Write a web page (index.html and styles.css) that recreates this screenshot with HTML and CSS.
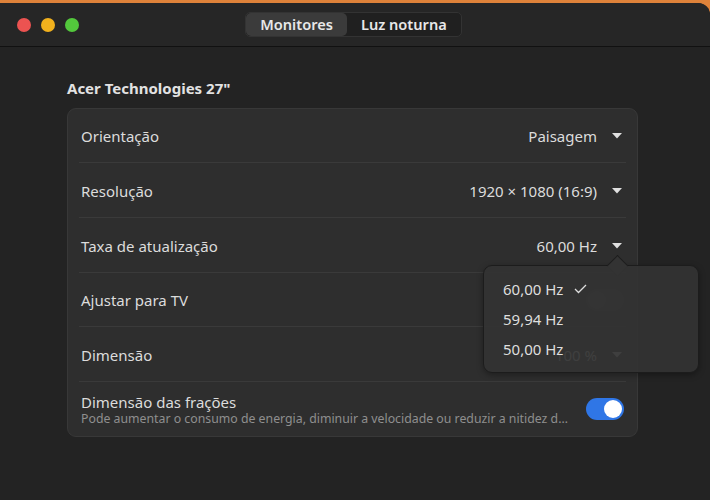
FILE: index.html
```html
<!DOCTYPE html>
<html lang="pt-BR">
<head>
    <meta charset="UTF-8">
    <title>Monitores</title>
    <link rel="stylesheet" href="styles.css">
</head>
<body>
    <div class="window">
        <div class="headerbar">
            <div class="controls">
                <span class="dot close"></span>
                <span class="dot min"></span>
                <span class="dot max"></span>
            </div>
            <div class="switcher">
                <div class="tab active">Monitores</div>
                <div class="tab">Luz noturna</div>
            </div>
            <div></div>
        </div>

        <div class="content">
            <h2 class="monitor-title">Acer Technologies 27"</h2>
            <div class="card">
                <div class="row short">
                    <span class="label">Orientação</span>
                    <span class="value">Paisagem</span>
                    <svg class="arrow" width="10" height="6" viewBox="0 0 10 6"><polygon points="0,0 10,0 5,5.5" /></svg>
                </div>
                <div class="row">
                    <span class="label">Resolução</span>
                    <span class="value">1920 × 1080 (16:9)</span>
                    <svg class="arrow" width="10" height="6" viewBox="0 0 10 6"><polygon points="0,0 10,0 5,5.5" /></svg>
                </div>
                <div class="row">
                    <span class="label">Taxa de atualização</span>
                    <span class="value">60,00 Hz</span>
                    <svg class="arrow" width="10" height="6" viewBox="0 0 10 6"><polygon points="0,0 10,0 5,5.5" /></svg>
                </div>
                <div class="row short">
                    <span class="label">Ajustar para TV</span>
                    <span class="switch off"><span class="knob"></span></span>
                </div>
                <div class="row">
                    <span class="label">Dimensão</span>
                    <span class="value">100 %</span>
                    <svg class="arrow" width="10" height="6" viewBox="0 0 10 6"><polygon points="0,0 10,0 5,5.5" /></svg>
                </div>
                <div class="row last">
                    <div class="label-group">
                        <span class="label">Dimensão das frações</span>
                        <span class="sublabel">Pode aumentar o consumo de energia, diminuir a velocidade ou reduzir a nitidez da tela.</span>
                    </div>
                    <span class="switch on"><span class="knob"></span></span>
                </div>
            </div>

            <!-- refresh rate popover -->
            <div class="popover">
                <div class="popover-arrow"></div>
                <div class="item">60,00 Hz
                    <svg class="check" width="13" height="10" viewBox="0 0 13 10"><polyline points="1,5 4.5,8.5 12,1" /></svg>
                </div>
                <div class="item">59,94 Hz</div>
                <div class="item">50,00 Hz</div>
            </div>
        </div>
    </div>
</body>
</html>
```

FILE: styles.css
```css
body {
    margin: 0;
    background: #de823a;
    font-family: "Noto Sans", "Open Sans", sans-serif;
    color: #dedede;
    height: 100vh;
    overflow: hidden;
}

.window {
    margin-top: 3px;
    height: calc(100vh - 3px);
    background: #232323;
    border-top-right-radius: 12px;
}

/* Header */
.headerbar {
    height: 43px;
    background: #262626;
    border-bottom: 1px solid #111;
    border-top-right-radius: 12px;
    display: grid;
    grid-template-columns: 1fr auto 1fr;
    align-items: center;
}

.controls {
    display: flex;
    gap: 10px;
    padding-left: 17px;
}

.dot {
    width: 14px;
    height: 14px;
    border-radius: 50%;
}

.close { background: #ec5351; }
.min { background: #f2b11d; }
.max { background: #53c83c; }

.switcher {
    display: flex;
    background: #202020;
    border: 1px solid #333;
    border-radius: 5px;
    height: 23px;
    margin-right: 3px;
}

.tab {
    font-size: 14.6px;
    font-weight: 600;
    padding: 0 14px;
    line-height: 23px;
    border-radius: 5px;
    color: #e8e8e8;
}

.tab.active {
    background: #3b3b3b;
}

/* Content */
.content {
    position: relative;
    margin-left: 67px;
    width: 571px;
    padding-top: 31px;
}

.monitor-title {
    font-size: 15px;
    font-weight: 700;
    margin: 0 0 10px 0;
    color: #e2e2e2;
}

.card {
    background: #2e2e2e;
    border: 1px solid #383838;
    border-radius: 9px;
}

.row {
    height: 55px;
    display: flex;
    align-items: center;
    padding: 0 13px;
    position: relative;
}

.row.short {
    height: 54px;
}

.row::after {
    content: "";
    position: absolute;
    left: 11px;
    right: 11px;
    bottom: 0;
    height: 1px;
    background: #3a3a3a;
}

.row.last {
    height: 54px;
}

.row.last::after {
    display: none;
}

.label {
    font-size: 15px;
    flex: 1;
    color: #dcdcdc;
}

.value {
    font-size: 15px;
    color: #dcdcdc;
    margin-right: 15px;
}

.arrow {
    fill: #e0e0e0;
    margin-right: 2px;
}

.label-group {
    display: flex;
    flex-direction: column;
    flex: 1;
    min-width: 0;
    padding-top: 1px;
}

.label-group .label {
    line-height: 18px;
}

.sublabel {
    font-size: 12.3px;
    color: #8f8f8f;
    white-space: nowrap;
    overflow: hidden;
    text-overflow: ellipsis;
    max-width: 491px;
    line-height: 16px;
}

.switch {
    width: 38px;
    height: 22px;
    border-radius: 11px;
    display: flex;
    align-items: center;
    padding: 0 2px;
    box-sizing: border-box;
}

.switch .knob {
    width: 18px;
    height: 18px;
    border-radius: 50%;
}

.switch.on {
    background: #2f76e6;
    justify-content: flex-end;
}

.switch.on .knob {
    background: #fff;
}

.switch.off {
    background: #3c3c3c;
}

.switch.off .knob {
    background: #4a4a4a;
}

/* Popover */
.popover {
    position: absolute;
    left: 416px;
    top: 218px;
    width: 214px;
    padding: 8px 0;
    background: rgba(51, 51, 51, 0.93);
    border: 1px solid #1c1c1c;
    border-radius: 9px;
    box-shadow: 0 2px 6px rgba(0, 0, 0, 0.35);
}

.popover-arrow {
    position: absolute;
    top: -8px;
    left: 126px;
    width: 14px;
    height: 14px;
    background: #333;
    border-left: 1px solid #1c1c1c;
    border-top: 1px solid #1c1c1c;
    transform: rotate(45deg);
}

.item {
    font-size: 15px;
    height: 30px;
    display: flex;
    align-items: center;
    padding-left: 19px;
    color: #dedede;
}

.check {
    fill: none;
    stroke: #dedede;
    stroke-width: 1.3;
    margin-left: 11px;
}
```
